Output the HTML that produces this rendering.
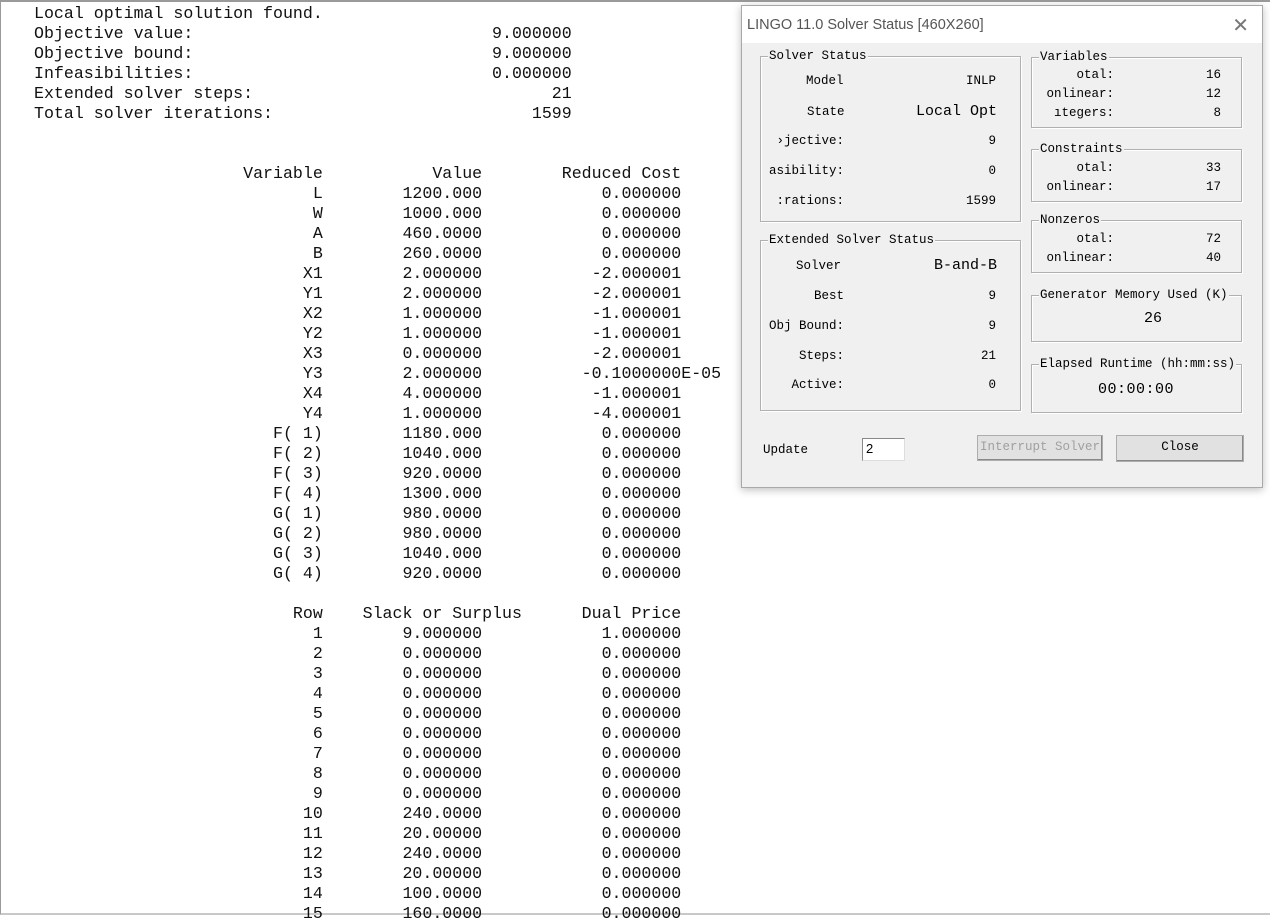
<!DOCTYPE html>
<html><head><meta charset="utf-8"><style>
*{margin:0;padding:0;box-sizing:border-box}
body{width:1270px;height:915px;background:#fff;position:relative;overflow:hidden}
.frame{position:absolute;left:0;top:0;width:1270px;height:915px;border-top:2px solid #9a9a9a;border-left:1px solid #9a9a9a;border-bottom:2px solid #c8c8c8}
pre{position:absolute;left:34px;top:4px;font-family:"Liberation Mono",monospace;font-size:16.6px;line-height:20px;color:#111;letter-spacing:0}
.dlg{position:absolute;left:741px;top:5px;width:522px;height:483px;background:#f0f0f0;border:1px solid #a8a8a8;box-shadow:0 2px 8px rgba(0,0,0,.25)}
.tb{position:absolute;left:0;top:0;width:100%;height:37px;background:#fff}
.tt{position:absolute;left:5px;top:11px;font-family:"Liberation Sans",sans-serif;font-size:14.5px;color:#555}
.x{position:absolute;right:13px;top:7px;font-family:"DejaVu Sans",sans-serif;font-size:20px;color:#777;font-weight:200}
.g{position:absolute;border:1px solid #b0b0b0;box-shadow:1px 1px 0 #fff inset,1px 1px 0 #fff}
.gl{position:absolute;top:-9px;left:7px;background:#f0f0f0;padding:0 1px;font-family:"Liberation Mono",monospace;font-size:12.5px;color:#000;line-height:16px;white-space:nowrap}
.t{position:absolute;font-family:"Liberation Mono",monospace;font-size:12.5px;color:#000;line-height:16px;white-space:nowrap}
.m{font-family:"Liberation Mono",monospace;font-size:15px}
.r{text-align:right}
.btn{position:absolute;border:1px solid #adadad;background:#e1e1e1;font-family:"Liberation Mono",monospace;font-size:12.5px;text-align:center;line-height:23px;box-shadow:inset -1px -1px 0 #888}
</style></head><body>
<div class="frame"></div>
<pre>Local optimal solution found.
Objective value:                              9.000000
Objective bound:                              9.000000
Infeasibilities:                              0.000000
Extended solver steps:                              21
Total solver iterations:                          1599


                     Variable           Value        Reduced Cost
                            L        1200.000            0.000000
                            W        1000.000            0.000000
                            A        460.0000            0.000000
                            B        260.0000            0.000000
                           X1        2.000000           -2.000001
                           Y1        2.000000           -2.000001
                           X2        1.000000           -1.000001
                           Y2        1.000000           -1.000001
                           X3        0.000000           -2.000001
                           Y3        2.000000          -0.1000000E-05
                           X4        4.000000           -1.000001
                           Y4        1.000000           -4.000001
                        F( 1)        1180.000            0.000000
                        F( 2)        1040.000            0.000000
                        F( 3)        920.0000            0.000000
                        F( 4)        1300.000            0.000000
                        G( 1)        980.0000            0.000000
                        G( 2)        980.0000            0.000000
                        G( 3)        1040.000            0.000000
                        G( 4)        920.0000            0.000000

                          Row    Slack or Surplus      Dual Price
                            1        9.000000            1.000000
                            2        0.000000            0.000000
                            3        0.000000            0.000000
                            4        0.000000            0.000000
                            5        0.000000            0.000000
                            6        0.000000            0.000000
                            7        0.000000            0.000000
                            8        0.000000            0.000000
                            9        0.000000            0.000000
                           10        240.0000            0.000000
                           11        20.00000            0.000000
                           12        240.0000            0.000000
                           13        20.00000            0.000000
                           14        100.0000            0.000000
                           15        160.0000            0.000000</pre>

<div class="dlg">
<div class="tb"><div class="tt">LINGO 11.0 Solver Status [460X260]</div><div class="x">✕</div></div>
</div>
<div class="g" style="left:760px;top:56px;width:261px;height:166px"><div class="gl">Solver Status</div></div>
<div class="t" style="left:806px;top:73px">Model</div>
<div class="t r" style="left:900px;top:73px;width:96px">INLP</div>
<div class="t" style="left:807px;top:104px">State</div>
<div class="t r m" style="left:880px;top:104px;width:117px">Local Opt</div>
<div class="t r" style="left:740px;top:133px;width:104px">›jective:</div>
<div class="t r" style="left:920px;top:133px;width:76px">9</div>
<div class="t r" style="left:740px;top:163px;width:104px">asibility:</div>
<div class="t r" style="left:920px;top:163px;width:76px">0</div>
<div class="t r" style="left:740px;top:193px;width:104px">:rations:</div>
<div class="t r" style="left:920px;top:193px;width:76px">1599</div>

<div class="g" style="left:760px;top:240px;width:261px;height:171px"><div class="gl">Extended Solver Status</div></div>
<div class="t" style="left:796px;top:258px">Solver</div>
<div class="t r m" style="left:880px;top:258px;width:117px">B-and-B</div>
<div class="t r" style="left:740px;top:288px;width:104px">Best</div>
<div class="t r" style="left:920px;top:288px;width:76px">9</div>
<div class="t r" style="left:740px;top:318px;width:104px">Obj Bound:</div>
<div class="t r" style="left:920px;top:318px;width:76px">9</div>
<div class="t r" style="left:740px;top:348px;width:104px">Steps:</div>
<div class="t r" style="left:920px;top:348px;width:76px">21</div>
<div class="t r" style="left:740px;top:377px;width:104px">Active:</div>
<div class="t r" style="left:920px;top:377px;width:76px">0</div>

<div class="g" style="left:1031px;top:57px;width:211px;height:71px"><div class="gl">Variables</div></div>
<div class="t r" style="left:1031px;top:67px;width:83px">otal:</div><div class="t r" style="left:1160px;top:67px;width:61px">16</div>
<div class="t r" style="left:1031px;top:86px;width:83px">onlinear:</div><div class="t r" style="left:1160px;top:86px;width:61px">12</div>
<div class="t r" style="left:1031px;top:105px;width:83px">ıtegers:</div><div class="t r" style="left:1160px;top:105px;width:61px">8</div>

<div class="g" style="left:1031px;top:149px;width:211px;height:53px"><div class="gl">Constraints</div></div>
<div class="t r" style="left:1031px;top:160px;width:83px">otal:</div><div class="t r" style="left:1160px;top:160px;width:61px">33</div>
<div class="t r" style="left:1031px;top:179px;width:83px">onlinear:</div><div class="t r" style="left:1160px;top:179px;width:61px">17</div>

<div class="g" style="left:1031px;top:220px;width:211px;height:53px"><div class="gl">Nonzeros</div></div>
<div class="t r" style="left:1031px;top:231px;width:83px">otal:</div><div class="t r" style="left:1160px;top:231px;width:61px">72</div>
<div class="t r" style="left:1031px;top:250px;width:83px">onlinear:</div><div class="t r" style="left:1160px;top:250px;width:61px">40</div>

<div class="g" style="left:1031px;top:295px;width:211px;height:47px"><div class="gl">Generator Memory Used (K)</div></div>
<div class="t m" style="left:1144px;top:311px">26</div>

<div class="g" style="left:1031px;top:364px;width:211px;height:49px"><div class="gl">Elapsed Runtime (hh:mm:ss)</div></div>
<div class="t m" style="left:1098px;top:382px;letter-spacing:0.5px">00:00:00</div>

<div class="t" style="left:763px;top:442px">Update</div>
<div style="position:absolute;left:862px;top:438px;width:43px;height:23px;background:#fff;border:1px solid #888;border-right-color:#ddd;border-bottom-color:#ddd;font-family:'Liberation Sans',sans-serif;font-size:13px;padding:2px 3px">2</div>
<div class="btn" style="left:977px;top:435px;width:126px;height:26px;color:#a0a0a0">Interrupt Solver</div>
<div class="btn" style="left:1116px;top:435px;width:128px;height:27px">Close</div>
</body></html>
